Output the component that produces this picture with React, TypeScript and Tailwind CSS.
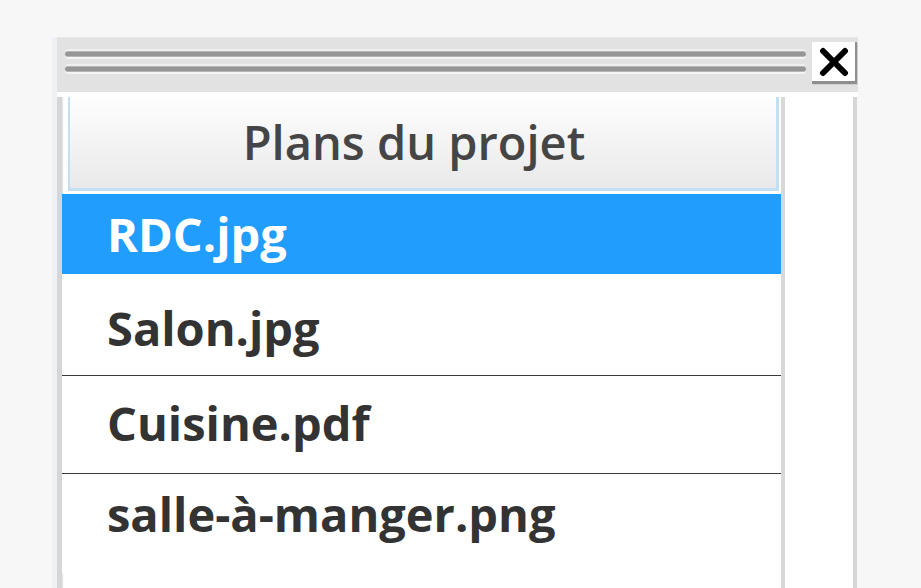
import React from "react";

const files = [
  { name: "RDC.jpg", h: "h-[80px]", pt: "pt-[17px]", active: true, line: false },
  { name: "Salon.jpg", h: "h-[102px]", pt: "pt-[31px]", active: false, line: true },
  { name: "Cuisine.pdf", h: "h-[98px]", pt: "pt-[24px]", active: false, line: true },
  { name: "salle-à-manger.png", h: "h-[100px]", pt: "pt-[17px]", active: false, line: false },
];

const CloseButton = () => (
  <button className="mt-[4px] w-[45px] h-[42px] bg-white flex items-center justify-center border-r-[2px] border-b-[3px] border-[#8f8f8f] shadow-[1px_1px_0_#cfcfcf]">
    <svg width="32" height="30" viewBox="0 0 32 30">
      <path d="M5 4 L27 26 M27 4 L5 26" stroke="#000" strokeWidth="6" strokeLinecap="round" />
    </svg>
  </button>
);

export default function App() {
  return (
    <div
      className="w-[921px] h-[588px] overflow-hidden bg-[#f7f7f7] pt-[37px] pl-[52px]"
      style={{ fontFamily: '"Open Sans", "Noto Sans", sans-serif' }}
    >
      <div className="w-[806px] h-[600px] flex flex-col border-l-[5px] border-[#eef2f7]">
        {/* title bar */}
        <div className="h-[55px] bg-[#e2e2e2] border-t border-[#e8e8e8] flex items-start pr-[1px]">
          <div className="flex-1 ml-[8px] mr-[6px] mt-[13px] flex flex-col gap-[9px]">
            <div className="h-[6px] bg-[#969696] border-y-[1px] border-[#b5b5b5] rounded-full shadow-[0_2px_0_#f4f4f4,0_-2px_0_#efefef]" />
            <div className="h-[6px] bg-[#969696] border-y-[1px] border-[#b5b5b5] rounded-full shadow-[0_2px_0_#f4f4f4,0_-2px_0_#efefef]" />
          </div>
          <CloseButton />
        </div>

        {/* body */}
        <div className="flex flex-1 pt-[5px] bg-white">
          <div className="w-[5px] bg-[#d6d6d6] shadow-[1px_0_1px_#e6e6e6]" />
          <div className="w-[719px] flex flex-col">
            <div className="ml-[6px] mr-[2px] h-[94px] pr-[18px] flex items-center justify-center bg-gradient-to-b from-[#fefefe] to-[#e9e9e9] border-l-[2px] border-r-[3px] border-b-[3px] border-[#c3e0f2]">
              <span className="text-[47px] leading-[47px] font-semibold text-[#454545]">Plans du projet</span>
            </div>
            <div className="mt-[3px] flex flex-col">
              {files.map((f) => (
                <div
                  key={f.name}
                  className={`${f.h} ${f.pt} pl-[45px] ${
                    f.active ? "bg-[#209dfd] text-white" : "bg-white text-[#333333]"
                  } ${f.line ? "border-b border-[#3a3a3a]" : ""}`}
                >
                  <span className="text-[47px] leading-[47px] font-bold">{f.name}</span>
                </div>
              ))}
            </div>
          </div>
          <div className="w-[4px] bg-[#d8d8d8]" />
          <div className="w-[68px] bg-white" />
          <div className="w-[4px] bg-[#d6d6d6]" />
          <div className="flex-1 bg-[#f8f8f8]" />
        </div>
      </div>
    </div>
  );
}
